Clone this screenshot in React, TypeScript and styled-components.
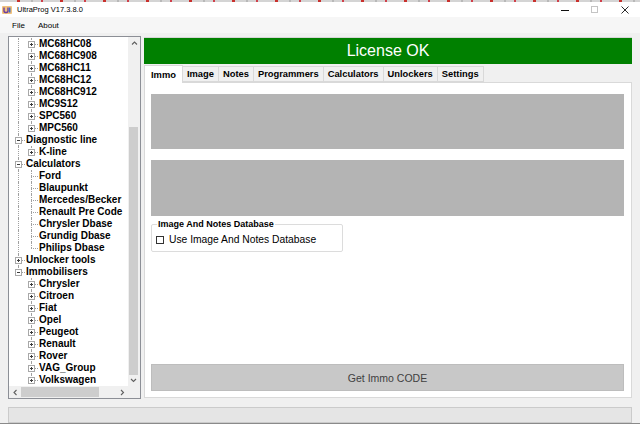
import React from 'react'
import styled, { createGlobalStyle } from 'styled-components'

type Cell = { up?: boolean; down?: boolean; h?: boolean; box?: '+' | '-' }

interface TreeRow {
  label: string
  cells: Cell[]
}

const GlobalStyle = createGlobalStyle`
  html, body {
    margin: 0;
    padding: 0;
    background: #f0f0f0;
    font-family: "Liberation Sans", Arial, sans-serif;
  }
`

const Window = styled.div`
  width: 640px;
  height: 424px;
  display: flex;
  flex-direction: column;
  background: #f0f0f0;
  overflow: hidden;
`

const DesktopStrip = styled.div`
  height: 2px;
  background: repeating-linear-gradient(
    90deg,
    #d4d4d4 0 17px,
    #c9302c 17px 20px,
    #d4d4d4 20px 31px,
    #b8b8b8 31px 33px,
    #d4d4d4 33px 41px,
    #d0404a 41px 43px
  );
`

const TitleBar = styled.div`
  height: 15px;
  background: #fff;
  display: flex;
  align-items: center;
  padding-left: 2px;
`

const TitleText = styled.span`
  font-size: 7.5px;
  color: #000;
  margin-left: 5px;
`

const Controls = styled.div`
  margin-left: auto;
  display: flex;
  align-items: center;
`

const ControlButton = styled.div`
  width: 30px;
  height: 15px;
  display: flex;
  align-items: center;
  justify-content: center;
`

const MenuBar = styled.div`
  height: 16px;
  background: #f6f6f6;
  display: flex;
  align-items: center;
  padding-left: 12px;
  gap: 13px;
`

const MenuItem = styled.span`
  font-size: 8px;
  color: #000;
`

const Body = styled.div`
  height: 365px;
  display: flex;
  padding: 3px 8px 0 8px;
  gap: 3px;
`

const TreePanel = styled.div`
  width: 133px;
  height: 363px;
  box-sizing: border-box;
  border: 1px solid #8c8f96;
  background: #fff;
  display: grid;
  grid-template-columns: 119px 12px;
  grid-template-rows: 349px 12px;
`

const TreeViewport = styled.div`
  overflow: hidden;
  padding: 1px 0 0 3px;
`

const Row = styled.div`
  height: 12px;
  display: flex;
  align-items: center;
`

const Guide = styled.div<{ $up?: boolean; $down?: boolean; $h?: boolean }>`
  position: relative;
  width: 13px;
  height: 12px;
  flex: none;

  &::before {
    content: '';
    display: ${p => (p.$up || p.$down ? 'block' : 'none')};
    position: absolute;
    left: 6px;
    top: ${p => (p.$up ? '0' : '6px')};
    bottom: ${p => (p.$down ? '0' : '6px')};
    border-left: 1px dotted #a0a0a0;
  }

  &::after {
    content: '';
    display: ${p => (p.$h ? 'block' : 'none')};
    position: absolute;
    left: 6px;
    right: 0;
    top: 6px;
    border-top: 1px dotted #a0a0a0;
  }
`

const ExpandBox = styled.svg`
  position: absolute;
  left: 3px;
  top: 3px;
  z-index: 1;
`

const NodeLabel = styled.span`
  font-size: 10px;
  font-weight: 700;
  line-height: 12px;
  color: #000;
  white-space: nowrap;
  padding-left: 1px;
`

const VScroll = styled.div`
  background: #f0f0f0;
  display: flex;
  flex-direction: column;
`

const HScroll = styled.div`
  background: #f0f0f0;
  display: flex;
`

const ArrowCell = styled.div<{ $size: number }>`
  flex: none;
  width: ${p => p.$size}px;
  height: ${p => p.$size}px;
  display: flex;
  align-items: center;
  justify-content: center;
`

const VTrack = styled.div`
  flex: 1;
  display: flex;
  flex-direction: column;
  padding: 0 2px 0 1px;
`

const VThumb = styled.div`
  margin-top: 78px;
  flex: 1;
  background: #cdcdcd;
`

const HTrack = styled.div`
  flex: 1;
  display: flex;
  padding: 1px 0 1px 0;
`

const HThumb = styled.div`
  width: 78px;
  background: #cdcdcd;
`

const Corner = styled.div`
  background: #f0f0f0;
`

const RightColumn = styled.div`
  width: 488px;
  display: flex;
  flex-direction: column;
  padding-top: 1px;
`

const Banner = styled.div`
  height: 26px;
  background: #008000;
  border-top: 1px solid #d6d6d6;
  color: #fff;
  font-size: 16px;
  display: flex;
  align-items: center;
  justify-content: center;
`

const TabStrip = styled.div`
  height: 17px;
  margin-top: 1px;
  display: flex;
  align-items: flex-end;
`

const Tab = styled.div<{ $active?: boolean }>`
  position: relative;
  z-index: ${p => (p.$active ? 2 : 1)};
  height: ${p => (p.$active ? 18 : 16)}px;
  margin-bottom: ${p => (p.$active ? -1 : 0)}px;
  margin-left: ${p => (p.$active ? 0 : -1)}px;
  padding: 0 ${p => (p.$active ? 6 : 4)}px;
  box-sizing: border-box;
  background: ${p => (p.$active ? '#fff' : '#f0f0f0')};
  border: 1px solid #d9d9d9;
  border-bottom: ${p => (p.$active ? 'none' : '1px solid #d9d9d9')};
  font-size: 9.35px;
  font-weight: 700;
  color: #000;
  display: flex;
  align-items: center;
  white-space: nowrap;
`

const TabPanel = styled.div`
  height: 316px;
  box-sizing: border-box;
  background: #fff;
  border: 1px solid #d9d9d9;
  display: flex;
  flex-direction: column;
  padding: 11px 7px 6px 6px;
`

const GrayBlock = styled.div<{ $h: number }>`
  height: ${p => p.$h}px;
  background: #b4b4b4;
  flex: none;
`

const BlockGap = styled.div`
  height: 11px;
  flex: none;
`

const GroupBox = styled.fieldset`
  width: 192px;
  box-sizing: border-box;
  margin: 3px 0 0 0;
  padding: 5px 4px 6px 4px;
  border: 1px solid #dcdcdc;
  border-radius: 2px;
`

const GroupLegend = styled.legend`
  font-size: 9px;
  font-weight: 700;
  color: #000;
  padding: 0 1px;
  margin-left: 1px;
  line-height: 10px;
`

const CheckRow = styled.label`
  display: flex;
  align-items: center;
  gap: 5px;
  font-size: 10.3px;
  color: #000;
`

const CheckBox = styled.span`
  width: 8px;
  height: 8px;
  border: 1px solid #333;
  background: #fff;
  box-sizing: border-box;
`

const ActionButton = styled.div`
  margin-top: auto;
  height: 27px;
  box-sizing: border-box;
  background: #c8c8c8;
  border: 1px solid #bdbdbd;
  color: #404040;
  font-size: 10.5px;
  display: flex;
  align-items: center;
  justify-content: center;
`

const StatusBar = styled.div`
  margin: 6px 8px 0 8px;
  height: 16px;
  box-sizing: border-box;
  background: #e5e5e5;
  border: 1px solid #cbcbcb;
`

const BottomEdge = styled.div`
  margin-top: auto;
  height: 1px;
  background: #8a8a8a;
`

const pass: Cell = { up: true, down: true }
const mid: Cell = { up: true, down: true, h: true }
const last: Cell = { up: true, h: true }

const rows: TreeRow[] = [
  ...['MC68HC08', 'MC68HC908', 'MC68HC11', 'MC68HC12', 'MC68HC912', 'MC9S12', 'SPC560'].map(
    label => ({ label, cells: [pass, { ...mid, box: '+' as const }] })
  ),
  { label: 'MPC560', cells: [pass, { ...last, box: '+' }] },
  { label: 'Diagnostic line', cells: [{ ...mid, box: '-' }] },
  { label: 'K-line', cells: [pass, { ...last, box: '+' }] },
  { label: 'Calculators', cells: [{ ...mid, box: '-' }] },
  ...['Ford', 'Blaupunkt', 'Mercedes/Becker', 'Renault Pre Code', 'Chrysler Dbase', 'Grundig Dbase'].map(
    label => ({ label, cells: [pass, mid] })
  ),
  { label: 'Philips Dbase', cells: [pass, last] },
  { label: 'Unlocker tools', cells: [{ ...mid, box: '+' }] },
  { label: 'Immobilisers', cells: [{ ...last, box: '-' }] },
  ...['Chrysler', 'Citroen', 'Fiat', 'Opel', 'Peugeot', 'Renault', 'Rover', 'VAG_Group'].map(
    label => ({ label, cells: [{}, { ...mid, box: '+' as const }] })
  ),
  { label: 'Volkswagen', cells: [{}, { ...last, box: '+' }] },
]

const tabs = ['Immo', 'Image', 'Notes', 'Programmers', 'Calculators', 'Unlockers', 'Settings']

const Box: React.FC<{ sign: '+' | '-' }> = ({ sign }) => (
  <ExpandBox width="7" height="7" viewBox="0 0 7 7">
    <rect x="0.5" y="0.5" width="6" height="6" fill="#fff" stroke="#a8a8a8" />
    <line x1="2" y1="3.5" x2="5" y2="3.5" stroke="#3c3c3c" />
    {sign === '+' && <line x1="3.5" y1="2" x2="3.5" y2="5" stroke="#3c3c3c" />}
  </ExpandBox>
)

const Chevron: React.FC<{ dir: 'up' | 'down' | 'left' | 'right' }> = ({ dir }) => {
  const pts = {
    up: '1,4.5 3.5,2 6,4.5',
    down: '1,2 3.5,4.5 6,2',
    left: '4.5,1 2,3.5 4.5,6',
    right: '2,1 4.5,3.5 2,6',
  }[dir]
  return (
    <svg width="7" height="7" viewBox="0 0 7 7">
      <polyline points={pts} fill="none" stroke="#606060" strokeWidth="1.1" />
    </svg>
  )
}

const AppIcon = () => (
  <svg width="10" height="8" viewBox="0 0 10 8">
    <rect x="0" y="0" width="10" height="8" rx="1" fill="#f2c27c" />
    <path d="M2 1.5 V5 Q2 6.5 4 6.5 Q6 6.5 6 5 V1.5" fill="none" stroke="#6b3fa0" strokeWidth="1.4" />
    <rect x="7" y="1.5" width="1.5" height="5" fill="#3d6fc4" />
  </svg>
)

const App: React.FC = () => {
  return (
    <Window>
      <GlobalStyle />
      <DesktopStrip />
      <TitleBar>
        <AppIcon />
        <TitleText>UltraProg V17.3.8.0</TitleText>
        <Controls>
          <ControlButton>
            <svg width="8" height="8" viewBox="0 0 8 8">
              <line x1="0" y1="4.5" x2="8" y2="4.5" stroke="#111" />
            </svg>
          </ControlButton>
          <ControlButton>
            <svg width="8" height="8" viewBox="0 0 8 8">
              <rect x="0.5" y="0.5" width="6" height="6" fill="none" stroke="#c4c4c4" />
            </svg>
          </ControlButton>
          <ControlButton>
            <svg width="8" height="8" viewBox="0 0 8 8">
              <path d="M0.5 0.5 L7.5 7.5 M7.5 0.5 L0.5 7.5" stroke="#111" strokeWidth="0.9" />
            </svg>
          </ControlButton>
        </Controls>
      </TitleBar>
      <MenuBar>
        <MenuItem>File</MenuItem>
        <MenuItem>About</MenuItem>
      </MenuBar>
      <Body>
        <TreePanel>
          <TreeViewport>
            {rows.map(row => (
              <Row key={row.label}>
                {row.cells.map((c, i) => (
                  <Guide key={i} $up={c.up} $down={c.down} $h={c.h}>
                    {c.box && <Box sign={c.box} />}
                  </Guide>
                ))}
                <NodeLabel>{row.label}</NodeLabel>
              </Row>
            ))}
          </TreeViewport>
          <VScroll>
            <ArrowCell $size={12}>
              <Chevron dir="up" />
            </ArrowCell>
            <VTrack>
              <VThumb />
            </VTrack>
            <ArrowCell $size={11}>
              <Chevron dir="down" />
            </ArrowCell>
          </VScroll>
          <HScroll>
            <ArrowCell $size={12}>
              <Chevron dir="left" />
            </ArrowCell>
            <HTrack>
              <HThumb />
            </HTrack>
            <ArrowCell $size={12}>
              <Chevron dir="right" />
            </ArrowCell>
          </HScroll>
          <Corner />
        </TreePanel>
        <RightColumn>
          <Banner>License OK</Banner>
          <TabStrip>
            {tabs.map((t, i) => (
              <Tab key={t} $active={i === 0}>
                {t}
              </Tab>
            ))}
          </TabStrip>
          <TabPanel>
            <GrayBlock $h={55} />
            <BlockGap />
            <GrayBlock $h={56} />
            <GroupBox>
              <GroupLegend>Image And Notes Database</GroupLegend>
              <CheckRow>
                <CheckBox />
                Use Image And Notes Database
              </CheckRow>
            </GroupBox>
            <ActionButton>Get Immo CODE</ActionButton>
          </TabPanel>
        </RightColumn>
      </Body>
      <StatusBar />
      <BottomEdge />
    </Window>
  )
}

export default App
